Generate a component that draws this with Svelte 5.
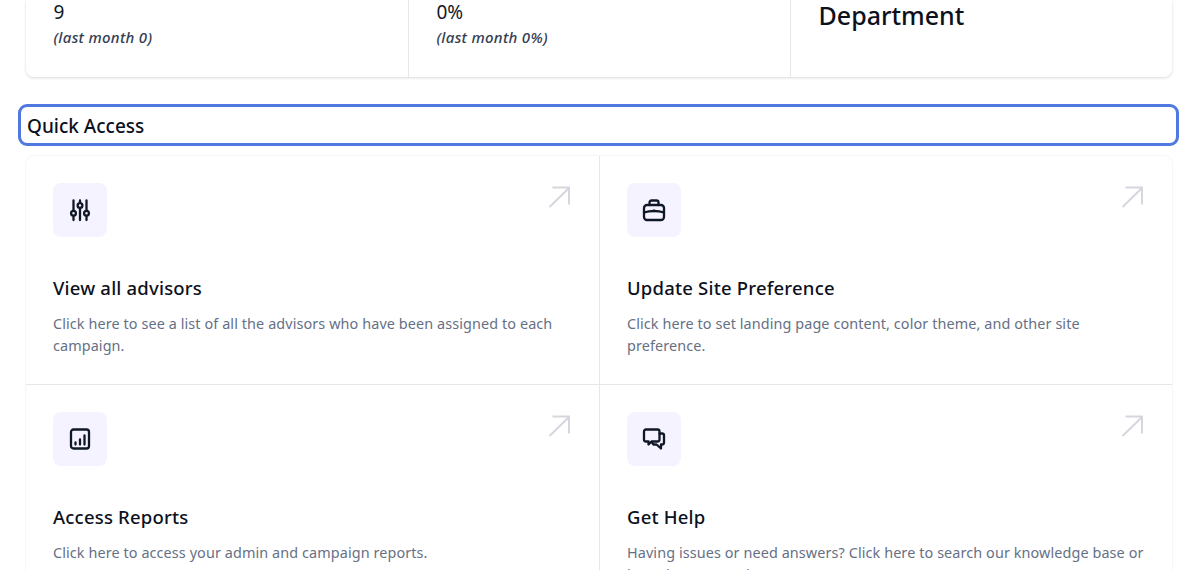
<script>
  const cards = [
    { icon: 'sliders', title: 'View all advisors', desc: 'Click here to see a list of all the advisors who have been assigned to each campaign.' },
    { icon: 'case', title: 'Update Site Preference', desc: 'Click here to set landing page content, color theme, and other site preference.' },
    { icon: 'chart', title: 'Access Reports', desc: 'Click here to access your admin and campaign reports.' },
    { icon: 'chat', title: 'Get Help', desc: 'Having issues or need answers? Click here to search our knowledge base or learn how to reach our support team.' }
  ];
</script>

<div class="page">
  <section class="stats">
    <div class="stat">
      <div class="num">9</div>
      <div class="sub">(last month 0)</div>
    </div>
    <div class="stat">
      <div class="num">0%</div>
      <div class="sub">(last month 0%)</div>
    </div>
    <div class="stat dept">Department</div>
  </section>

  <h2 class="heading">Quick Access</h2>

  <section class="grid">
    {#each cards as c}
      <div class="cell">
        <div class="top">
          <div class="tile">
            <svg width="24" height="24" viewBox="0 0 24 24" fill="none" stroke="#101828" stroke-width="2.300" stroke-linecap="round" stroke-linejoin="round">
              {#if c.icon === 'sliders'}
                <path d="M5.500 2.500v10M5.500 18v4M12 2.500v2M12 10v12M18.500 2.500v10M18.500 18v4" />
                <circle cx="5.500" cy="15.200" r="2.400" />
                <circle cx="12" cy="7.500" r="2.400" />
                <circle cx="18.500" cy="15.200" r="2.400" />
              {:else if c.icon === 'case'}
                <rect x="2" y="7" width="20" height="15" rx="3" />
                <path d="M7.500 7V4.500A2 2 0 0 1 9.500 2.500h5a2 2 0 0 1 2 2V7" />
                <path d="M2 14.500c3 -1 6 -1.500 10 -1.500s7 .5 10 1.500" />
                <path d="M12 12.800v.1" stroke-width="2.600" />
              {:else if c.icon === 'chart'}
                <rect x="3" y="2.500" width="18" height="19" rx="2.500" />
                <path d="M7.500 17.500v-2M12 17.500v-5M16.500 17.500v-9" />
              {:else}
                <path d="M4 2.500h11.500a2 2 0 0 1 2 2v8a2 2 0 0 1-2 2h-6l-3 3v-3H4a2 2 0 0 1-2-2v-8a2 2 0 0 1 2-2z" />
                <path d="M17.500 6.500H20a2 2 0 0 1 2 2v7a2 2 0 0 1-2 2h-1v4l-4.500-4h-3l-2-2.500" />
              {/if}
            </svg>
          </div>
          <svg class="arrow" width="24" height="24" viewBox="0 0 24 24" fill="none" stroke="#d7d5de" stroke-width="2">
            <path d="M1.500 22 21 3M4.500 2.500H21v17" />
          </svg>
        </div>
        <h3>{c.title}</h3>
        <p>{c.desc}</p>
      </div>
    {/each}
  </section>
</div>

<style>
  :global(body) {
    margin: 0;
    background: #fff;
    font-family: "Noto Sans", "Open Sans", sans-serif;
    color: #101828;
  }
  .page {
    width: 1198px;
    height: 570px;
    overflow: hidden;
    padding: 0 26px;
    box-sizing: border-box;
  }
  .stats {
    display: grid;
    grid-template-columns: repeat(3, 1fr);
    height: 77px;
    border-radius: 0 0 8px 8px;
    box-shadow: 0 1px 3px rgba(16, 24, 40, 0.16);
  }
  .stat {
    padding: 0 27px 0 27.500px;
    border-left: 1px solid #e6e7ea;
  }
  .stat:first-child { border-left: 0; }
  .num {
    font-size: 19px;
    line-height: 25px;
  }
  .sub {
    font-size: 15px;
    letter-spacing: 0.300px;
    line-height: 24px;
    font-style: italic;
    font-weight: 500;
    color: #344054;
  }
  .dept {
    font-size: 25px;
    font-weight: 500;
    line-height: 31px;
    color: #0c111d;
  }
  .heading {
    margin: 28px -6px 11px -7px;
    padding: 7px 8px;
    height: 40px;
    box-sizing: border-box;
    border-radius: 8px;
    outline: 3px solid #4f79e0;
    outline-offset: -2px;
    font-size: 19px;
    font-weight: 500;
    line-height: 29px;
    color: #0c111d;
  }
  .grid {
    display: grid;
    grid-template-columns: 1fr 1fr;
    border-radius: 8px;
    box-shadow: 0 0 2px rgba(16, 24, 40, 0.12);
  }
  .cell {
    padding: 27px;
    height: 228px;
    box-sizing: border-box;
  }
  .cell:nth-child(even) { border-left: 1px solid #e6e7ea; }
  .cell:nth-child(n + 3) {
    border-top: 1px solid #e6e7ea;
    padding-top: 26.500px;
  }
  .top {
    display: flex;
    justify-content: space-between;
    align-items: flex-start;
  }
  .tile {
    width: 53.500px;
    height: 54px;
    border-radius: 8px;
    background: #f5f3ff;
    display: flex;
    align-items: center;
    justify-content: center;
  }
  .arrow { margin-top: 2px; }
  h3 {
    margin: 37px 0 0;
    font-size: 18.500px;
    letter-spacing: 0.200px;
    font-weight: 500;
    line-height: 28px;
    color: #0c111d;
  }
  p {
    margin: 11px -3px 0 0;
    font-size: 14.400px;
    letter-spacing: 0.100px;
    line-height: 22px;
    color: #667085;
  }
</style>
